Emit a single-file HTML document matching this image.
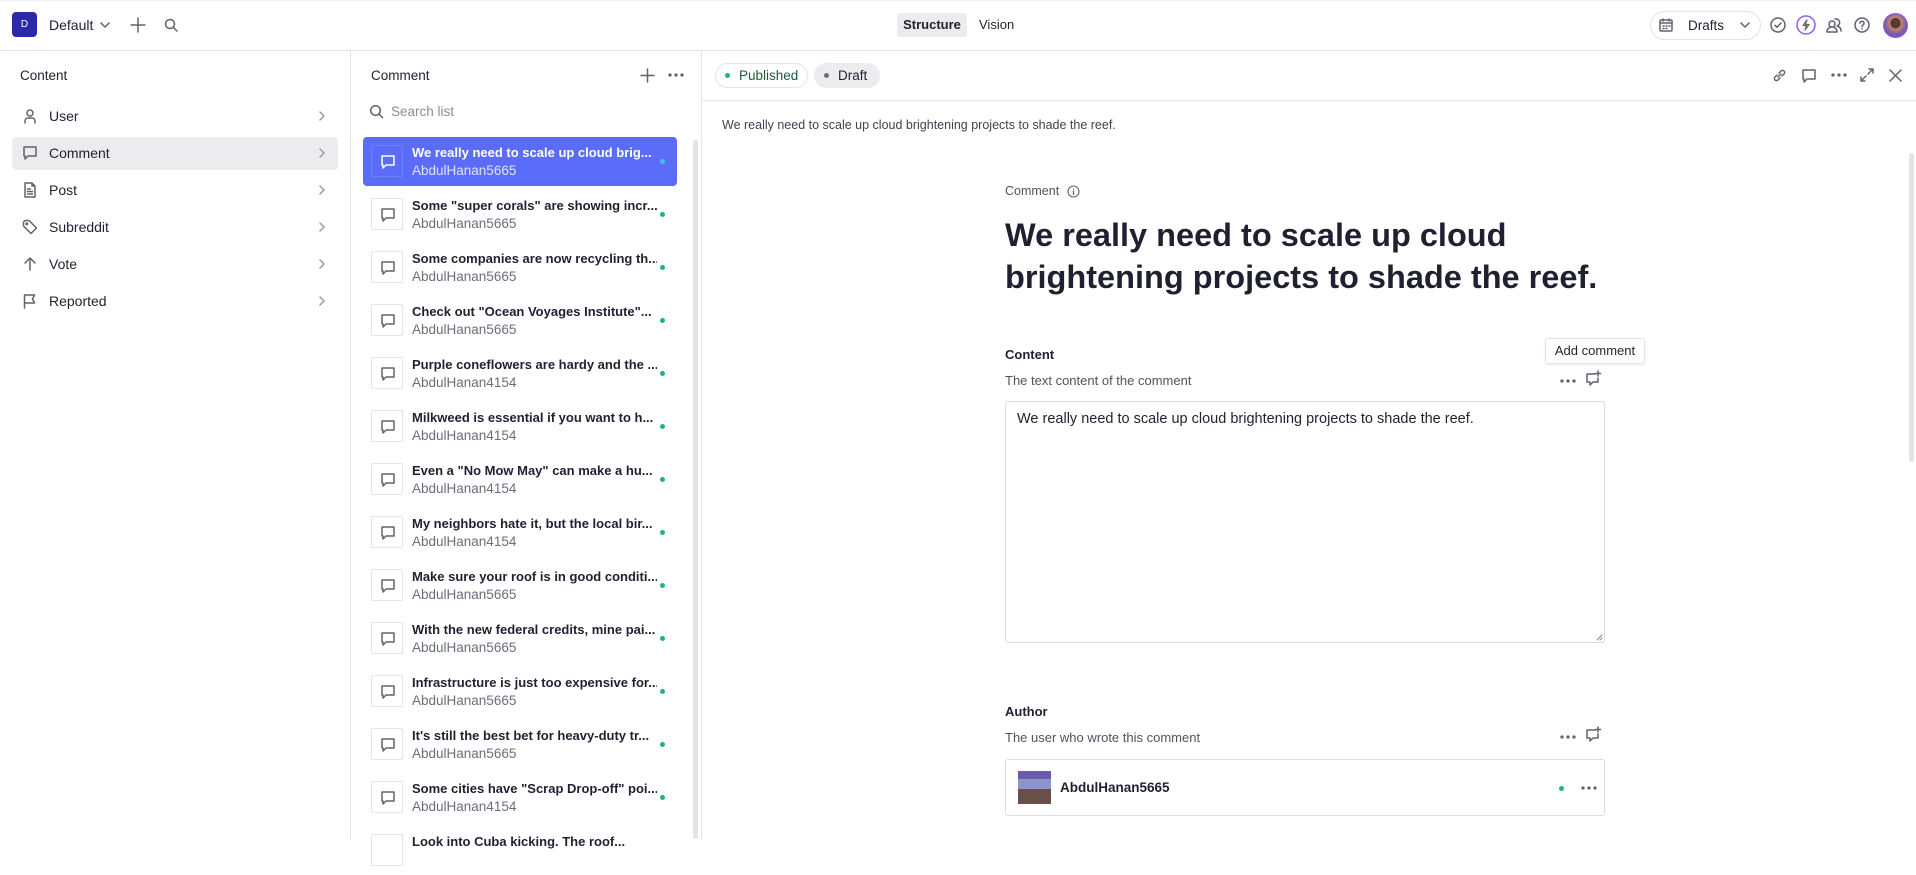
<!DOCTYPE html>
<html><head><meta charset="utf-8"><style>
*{box-sizing:border-box;margin:0;padding:0}
body{width:1916px;height:839px;overflow:hidden;background:#fff;font-family:"Liberation Sans",sans-serif;font-size:14px;color:#1f2130;position:relative}
.a{position:absolute}
svg{display:block;fill:none;stroke:#60636f;stroke-width:1.5;stroke-linecap:round;stroke-linejoin:round}
.hl{border-bottom:1px solid #e4e4e7}
.nav{position:absolute;left:12px;width:326px;height:33px;border-radius:4px}
.nav .ic{position:absolute;left:10px;top:8px}
.nav .t{position:absolute;left:37px;top:8px;font-size:14px;color:#1f2130}
.nav .ch{position:absolute;right:12px;top:11px}
.it{position:absolute;left:363px;width:314px;height:49px;border-radius:4px}
.it .bx{position:absolute;left:8px;top:8px;width:32px;height:32px;border:1px solid #e4e4e7;border-radius:2px}
.it .bx svg{margin:8px}
.it .t1{position:absolute;left:49px;top:8px;width:245px;overflow:hidden;font-size:13px;font-weight:bold;color:#1f2130;white-space:nowrap}
.it .t2{position:absolute;left:49px;top:26px;font-size:13.5px;color:#6b6e7a}
.it .dot{position:absolute;left:297px;top:22px;width:5px;height:5px;border-radius:50%;background:#1fb47a}
</style></head><body>
<div class="a hl" style="left:0;top:0;width:1916px;height:51px;border-top:1px solid #eee"></div>
<div class="a" style="left:12px;top:12px;width:25px;height:25px;background:#2c2aa8;border-radius:4px;color:#fff;font-size:10px;text-align:center;line-height:25px">D</div>
<div class="a" style="left:49px;top:17px;font-size:14px">Default</div>
<svg class="a" style="left:100px;top:21px" width="10" height="8"><path d="M1 2l4 4 4-4"/></svg>
<svg class="a" style="left:130px;top:17px" width="16" height="16"><path d="M8 1v14M1 8h14"/></svg>
<svg class="a" style="left:164px;top:18px" width="14" height="14"><circle cx="6" cy="6" r="4.5"/><path d="M9.5 9.5l3.5 3.5"/></svg>
<div class="a" style="left:897px;top:13px;width:70px;height:24px;background:#ececee;border-radius:3px;text-align:center;line-height:24px;font-weight:bold;font-size:13px">Structure</div>
<div class="a" style="left:979px;top:13px;line-height:24px;font-size:13px">Vision</div>
<div class="a" style="left:1650px;top:11px;width:111px;height:29px;border:1px solid #e4e4e7;border-radius:15px"></div>
<svg class="a" style="left:1659px;top:18px" width="14" height="14"><rect x="1" y="2" width="12" height="11" rx="1"/><path d="M1 5h12M4 1v2M10 1v2M4 8h1M7 8h1M10 8h1M4 10.5h1M7 10.5h1"/></svg>
<div class="a" style="left:1688px;top:18px;font-size:13.5px">Drafts</div>
<svg class="a" style="left:1740px;top:22px" width="10" height="7"><path d="M1 1l4 4 4-4"/></svg>
<svg class="a" style="left:1770px;top:17px" width="16" height="16"><circle cx="8" cy="8" r="7"/><path d="M5 8.3l2 2 4-4.3"/></svg>
<svg class="a" style="left:1796px;top:15px" width="20" height="20"><circle cx="10" cy="10" r="9" stroke="#8b5cf6"/><path d="M11 5l-4 5.5h3.5L9 15l4-5.5H9.5z" stroke="#60636f" stroke-width="1.2"/></svg>
<svg class="a" style="left:1825px;top:17px" width="18" height="16"><path d="M2 15c0-3 2-5 5-5s5 2 5 5zM7 10a3 3 0 1 0 0-6 3 3 0 0 0 0 6M10 2a3 3 0 0 1 2 7c2 .5 4 2 4 5"/></svg>
<svg class="a" style="left:1854px;top:17px" width="16" height="16"><circle cx="8" cy="8" r="7"/><path d="M6 6.2a2 2 0 1 1 2.5 2C8 8.5 8 9 8 9.6M8 11.8v.2"/></svg>
<div class="a" style="left:1883px;top:13px;width:25px;height:25px;border-radius:50%;background:radial-gradient(circle at 50% 40%,#5a3a2c 28%,#c48a6a 30%,#7e5ca8 60%,#6d48b0);border:1px solid #8b5cf6"></div>

<div class="a" style="left:350px;top:51px;width:1px;height:788px;background:#e4e4e7"></div>
<div class="a" style="left:20px;top:68px;font-size:13.5px">Content</div>
<div class="nav" style="top:100px"><svg class="ic" width="16" height="16"><circle cx="8" cy="5" r="3"/><path d="M3 15v-2a3 3 0 0 1 3-3h4a3 3 0 0 1 3 3v2"/></svg><span class="t">User</span><svg class="ch" width="8" height="10"><path d="M2 1l4 4-4 4" stroke="#9a9ca5"/></svg></div>
<div class="nav" style="top:137px;background:#ececee"><svg class="ic" width="16" height="16"><path d="M2 2h12v9H6l-3 3v-3H2z"/></svg><span class="t">Comment</span><svg class="ch" width="8" height="10"><path d="M2 1l4 4-4 4" stroke="#9a9ca5"/></svg></div>
<div class="nav" style="top:174px"><svg class="ic" width="16" height="16"><path d="M3 1h7l3 3v11H3zM10 1v3h3M5.5 7h3M5.5 9.5h5M5.5 12h5"/></svg><span class="t">Post</span><svg class="ch" width="8" height="10"><path d="M2 1l4 4-4 4" stroke="#9a9ca5"/></svg></div>
<div class="nav" style="top:211px"><svg class="ic" width="16" height="16"><path d="M1.5 3v4l7.5 7.5 5.5-5.5L7 1.5H3z"/><circle cx="4.8" cy="4.8" r=".8"/></svg><span class="t">Subreddit</span><svg class="ch" width="8" height="10"><path d="M2 1l4 4-4 4" stroke="#9a9ca5"/></svg></div>
<div class="nav" style="top:248px"><svg class="ic" width="16" height="16"><path d="M8 14V2M3 7l5-5 5 5"/></svg><span class="t">Vote</span><svg class="ch" width="8" height="10"><path d="M2 1l4 4-4 4" stroke="#9a9ca5"/></svg></div>
<div class="nav" style="top:285px"><svg class="ic" width="16" height="16"><path d="M2.5 15V2h10l-2 4 2 4h-10"/></svg><span class="t">Reported</span><svg class="ch" width="8" height="10"><path d="M2 1l4 4-4 4" stroke="#9a9ca5"/></svg></div>

<div class="a" style="left:701px;top:51px;width:1px;height:788px;background:#e4e4e7"></div>
<div class="a" style="left:371px;top:68px;font-size:13.5px">Comment</div>
<svg class="a" style="left:640px;top:68px" width="15" height="15"><path d="M7.5 1v13M1 7.5h13"/></svg>
<svg class="a" style="left:668px;top:73px" width="16" height="4"><circle cx="2" cy="2" r=".9" fill="#60636f"/><circle cx="8" cy="2" r=".9" fill="#60636f"/><circle cx="14" cy="2" r=".9" fill="#60636f"/></svg>
<svg class="a" style="left:369px;top:104px" width="15" height="15"><circle cx="6.5" cy="6.5" r="4.8"/><path d="M10 10l3.5 3.5"/></svg>
<div class="a" style="left:391px;top:104px;font-size:13.5px;color:#8a8d98">Search list</div>
<div class="a" style="left:693px;top:140px;width:5px;height:699px;background:#e4e4e7;border-radius:3px"></div>

<div class="it" style="top:137px;background:#5b6cf9"><div class="bx" style="border-color:#7080fb"><svg width="16" height="16" style="stroke:#fff"><path d="M2 2h12v9H6l-3 3v-3H2z"/></svg></div><div class="t1" style="color:#fff">We really need to scale up cloud brig...</div><div class="t2" style="color:#dfe3ff">AbdulHanan5665</div><div class="dot" style="background:#3ec0f0"></div></div>
<div class="it" style="top:190px"><div class="bx"><svg width="16" height="16"><path d="M2 2h12v9H6l-3 3v-3H2z"/></svg></div><div class="t1">Some "super corals" are showing incr...</div><div class="t2">AbdulHanan5665</div><div class="dot"></div></div>
<div class="it" style="top:243px"><div class="bx"><svg width="16" height="16"><path d="M2 2h12v9H6l-3 3v-3H2z"/></svg></div><div class="t1">Some companies are now recycling th...</div><div class="t2">AbdulHanan5665</div><div class="dot"></div></div>
<div class="it" style="top:296px"><div class="bx"><svg width="16" height="16"><path d="M2 2h12v9H6l-3 3v-3H2z"/></svg></div><div class="t1">Check out "Ocean Voyages Institute"...</div><div class="t2">AbdulHanan5665</div><div class="dot"></div></div>
<div class="it" style="top:349px"><div class="bx"><svg width="16" height="16"><path d="M2 2h12v9H6l-3 3v-3H2z"/></svg></div><div class="t1">Purple coneflowers are hardy and the ...</div><div class="t2">AbdulHanan4154</div><div class="dot"></div></div>
<div class="it" style="top:402px"><div class="bx"><svg width="16" height="16"><path d="M2 2h12v9H6l-3 3v-3H2z"/></svg></div><div class="t1">Milkweed is essential if you want to h...</div><div class="t2">AbdulHanan4154</div><div class="dot"></div></div>
<div class="it" style="top:455px"><div class="bx"><svg width="16" height="16"><path d="M2 2h12v9H6l-3 3v-3H2z"/></svg></div><div class="t1">Even a "No Mow May" can make a hu...</div><div class="t2">AbdulHanan4154</div><div class="dot"></div></div>
<div class="it" style="top:508px"><div class="bx"><svg width="16" height="16"><path d="M2 2h12v9H6l-3 3v-3H2z"/></svg></div><div class="t1">My neighbors hate it, but the local bir...</div><div class="t2">AbdulHanan4154</div><div class="dot"></div></div>
<div class="it" style="top:561px"><div class="bx"><svg width="16" height="16"><path d="M2 2h12v9H6l-3 3v-3H2z"/></svg></div><div class="t1">Make sure your roof is in good conditi...</div><div class="t2">AbdulHanan5665</div><div class="dot"></div></div>
<div class="it" style="top:614px"><div class="bx"><svg width="16" height="16"><path d="M2 2h12v9H6l-3 3v-3H2z"/></svg></div><div class="t1">With the new federal credits, mine pai...</div><div class="t2">AbdulHanan5665</div><div class="dot"></div></div>
<div class="it" style="top:667px"><div class="bx"><svg width="16" height="16"><path d="M2 2h12v9H6l-3 3v-3H2z"/></svg></div><div class="t1">Infrastructure is just too expensive for...</div><div class="t2">AbdulHanan5665</div><div class="dot"></div></div>
<div class="it" style="top:720px"><div class="bx"><svg width="16" height="16"><path d="M2 2h12v9H6l-3 3v-3H2z"/></svg></div><div class="t1">It's still the best bet for heavy-duty tr...</div><div class="t2">AbdulHanan5665</div><div class="dot"></div></div>
<div class="it" style="top:773px"><div class="bx"><svg width="16" height="16"><path d="M2 2h12v9H6l-3 3v-3H2z"/></svg></div><div class="t1">Some cities have "Scrap Drop-off" poi...</div><div class="t2">AbdulHanan4154</div><div class="dot"></div></div>
<div class="it" style="top:826px"><div class="bx"></div><div class="t1">Look into Cuba kicking. The roof...</div></div>

<div class="a hl" style="left:702px;top:51px;width:1214px;height:50px"></div>
<div class="a" style="left:715px;top:63px;width:93px;height:25px;border:1px solid #e4e4e7;border-radius:13px"></div>
<div class="a" style="left:725px;top:73px;width:5px;height:5px;border-radius:50%;background:#1fb47a"></div>
<div class="a" style="left:739px;top:68px;font-size:13.5px;color:#1c5a3a">Published</div>
<div class="a" style="left:814px;top:63px;width:66px;height:25px;background:#ececee;border-radius:13px"></div>
<div class="a" style="left:824px;top:73px;width:5px;height:5px;border-radius:50%;background:#6b6e7a"></div>
<div class="a" style="left:838px;top:68px;font-size:13.5px">Draft</div>
<svg class="a" style="left:1772px;top:68px" width="15" height="15"><path d="M6 9l3-3M5 7L3 9a2 2 0 0 0 3 3l2-2M10 8l2-2a2 2 0 0 0-3-3L7 5"/></svg>
<svg class="a" style="left:1801px;top:68px" width="16" height="16"><path d="M2 2h12v9H6l-3 3v-3H2z"/></svg>
<svg class="a" style="left:1831px;top:73px" width="16" height="4"><circle cx="2" cy="2" r=".9" fill="#60636f"/><circle cx="8" cy="2" r=".9" fill="#60636f"/><circle cx="14" cy="2" r=".9" fill="#60636f"/></svg>
<svg class="a" style="left:1860px;top:68px" width="14" height="14"><path d="M8 6l5-5M9 1h4v4M6 8l-5 5M1 9v4h4"/></svg>
<svg class="a" style="left:1889px;top:69px" width="13" height="13"><path d="M1 1l11 11M12 1L1 12"/></svg>
<div class="a" style="left:722px;top:118px;font-size:12.5px;color:#3f4250">We really need to scale up cloud brightening projects to shade the reef.</div>
<div class="a" style="left:1909px;top:153px;width:5px;height:309px;background:#e4e4e7;border-radius:3px"></div>

<div class="a" style="left:1005px;top:184px;font-size:12.5px;color:#50535f">Comment</div>
<svg class="a" style="left:1067px;top:185px" width="13" height="13"><circle cx="6.5" cy="6.5" r="5.5" stroke-width="1.1"/><path d="M6.5 6v3.5M6.5 4v.1" stroke-width="1.3"/></svg>
<div class="a" style="left:1005px;top:214px;width:640px;font-size:32.5px;font-weight:bold;line-height:42px;color:#1f2130">We really need to scale up cloud<br>brightening projects to shade the reef.</div>

<div class="a" style="left:1005px;top:347px;font-size:13px;font-weight:bold">Content</div>
<div class="a" style="left:1005px;top:373px;font-size:13px;color:#50535f">The text content of the comment</div>
<div class="a" style="left:1545px;top:338px;width:100px;height:26px;border:1px solid #e4e4e7;border-radius:3px;box-shadow:0 1px 3px rgba(0,0,0,.08);font-size:13px;text-align:center;line-height:24px;background:#fff">Add comment</div>
<svg class="a" style="left:1560px;top:379px" width="16" height="4"><circle cx="2" cy="2" r=".9" fill="#60636f"/><circle cx="8" cy="2" r=".9" fill="#60636f"/><circle cx="14" cy="2" r=".9" fill="#60636f"/></svg>
<svg class="a" style="left:1585px;top:370px" width="17" height="17"><path d="M10 4H2v8h3v3l3-3h5V8M13 1v5M10.5 3.5h5"/></svg>
<div class="a" style="left:1005px;top:401px;width:600px;height:242px;border:1px solid #dcdce0;border-radius:3px"></div>
<div class="a" style="left:1017px;top:411px;font-size:14.5px">We really need to scale up cloud brightening projects to shade the reef.</div>
<svg class="a" style="left:1596px;top:634px" width="7" height="7"><path d="M6 1L1 6M6 4L4 6" stroke="#888" stroke-width="1"/></svg>

<div class="a" style="left:1005px;top:704px;font-size:13px;font-weight:bold">Author</div>
<div class="a" style="left:1005px;top:730px;font-size:13px;color:#50535f">The user who wrote this comment</div>
<svg class="a" style="left:1560px;top:735px" width="16" height="4"><circle cx="2" cy="2" r=".9" fill="#60636f"/><circle cx="8" cy="2" r=".9" fill="#60636f"/><circle cx="14" cy="2" r=".9" fill="#60636f"/></svg>
<svg class="a" style="left:1585px;top:726px" width="17" height="17"><path d="M10 4H2v8h3v3l3-3h5V8M13 1v5M10.5 3.5h5"/></svg>
<div class="a" style="left:1005px;top:759px;width:600px;height:57px;border:1px solid #dcdce0;border-radius:3px"></div>
<div class="a" style="left:1018px;top:771px;width:33px;height:33px;background:linear-gradient(#6a5bb0 0 25%,#8d95c8 25% 55%,#6a4e48 55%)"></div>
<div class="a" style="left:1060px;top:780px;font-size:13.5px;font-weight:bold">AbdulHanan5665</div>
<div class="a" style="left:1559px;top:786px;width:5px;height:5px;border-radius:50%;background:#1fb47a"></div>
<svg class="a" style="left:1581px;top:786px" width="16" height="4"><circle cx="2" cy="2" r=".9" fill="#60636f"/><circle cx="8" cy="2" r=".9" fill="#60636f"/><circle cx="14" cy="2" r=".9" fill="#60636f"/></svg>
</body></html>
